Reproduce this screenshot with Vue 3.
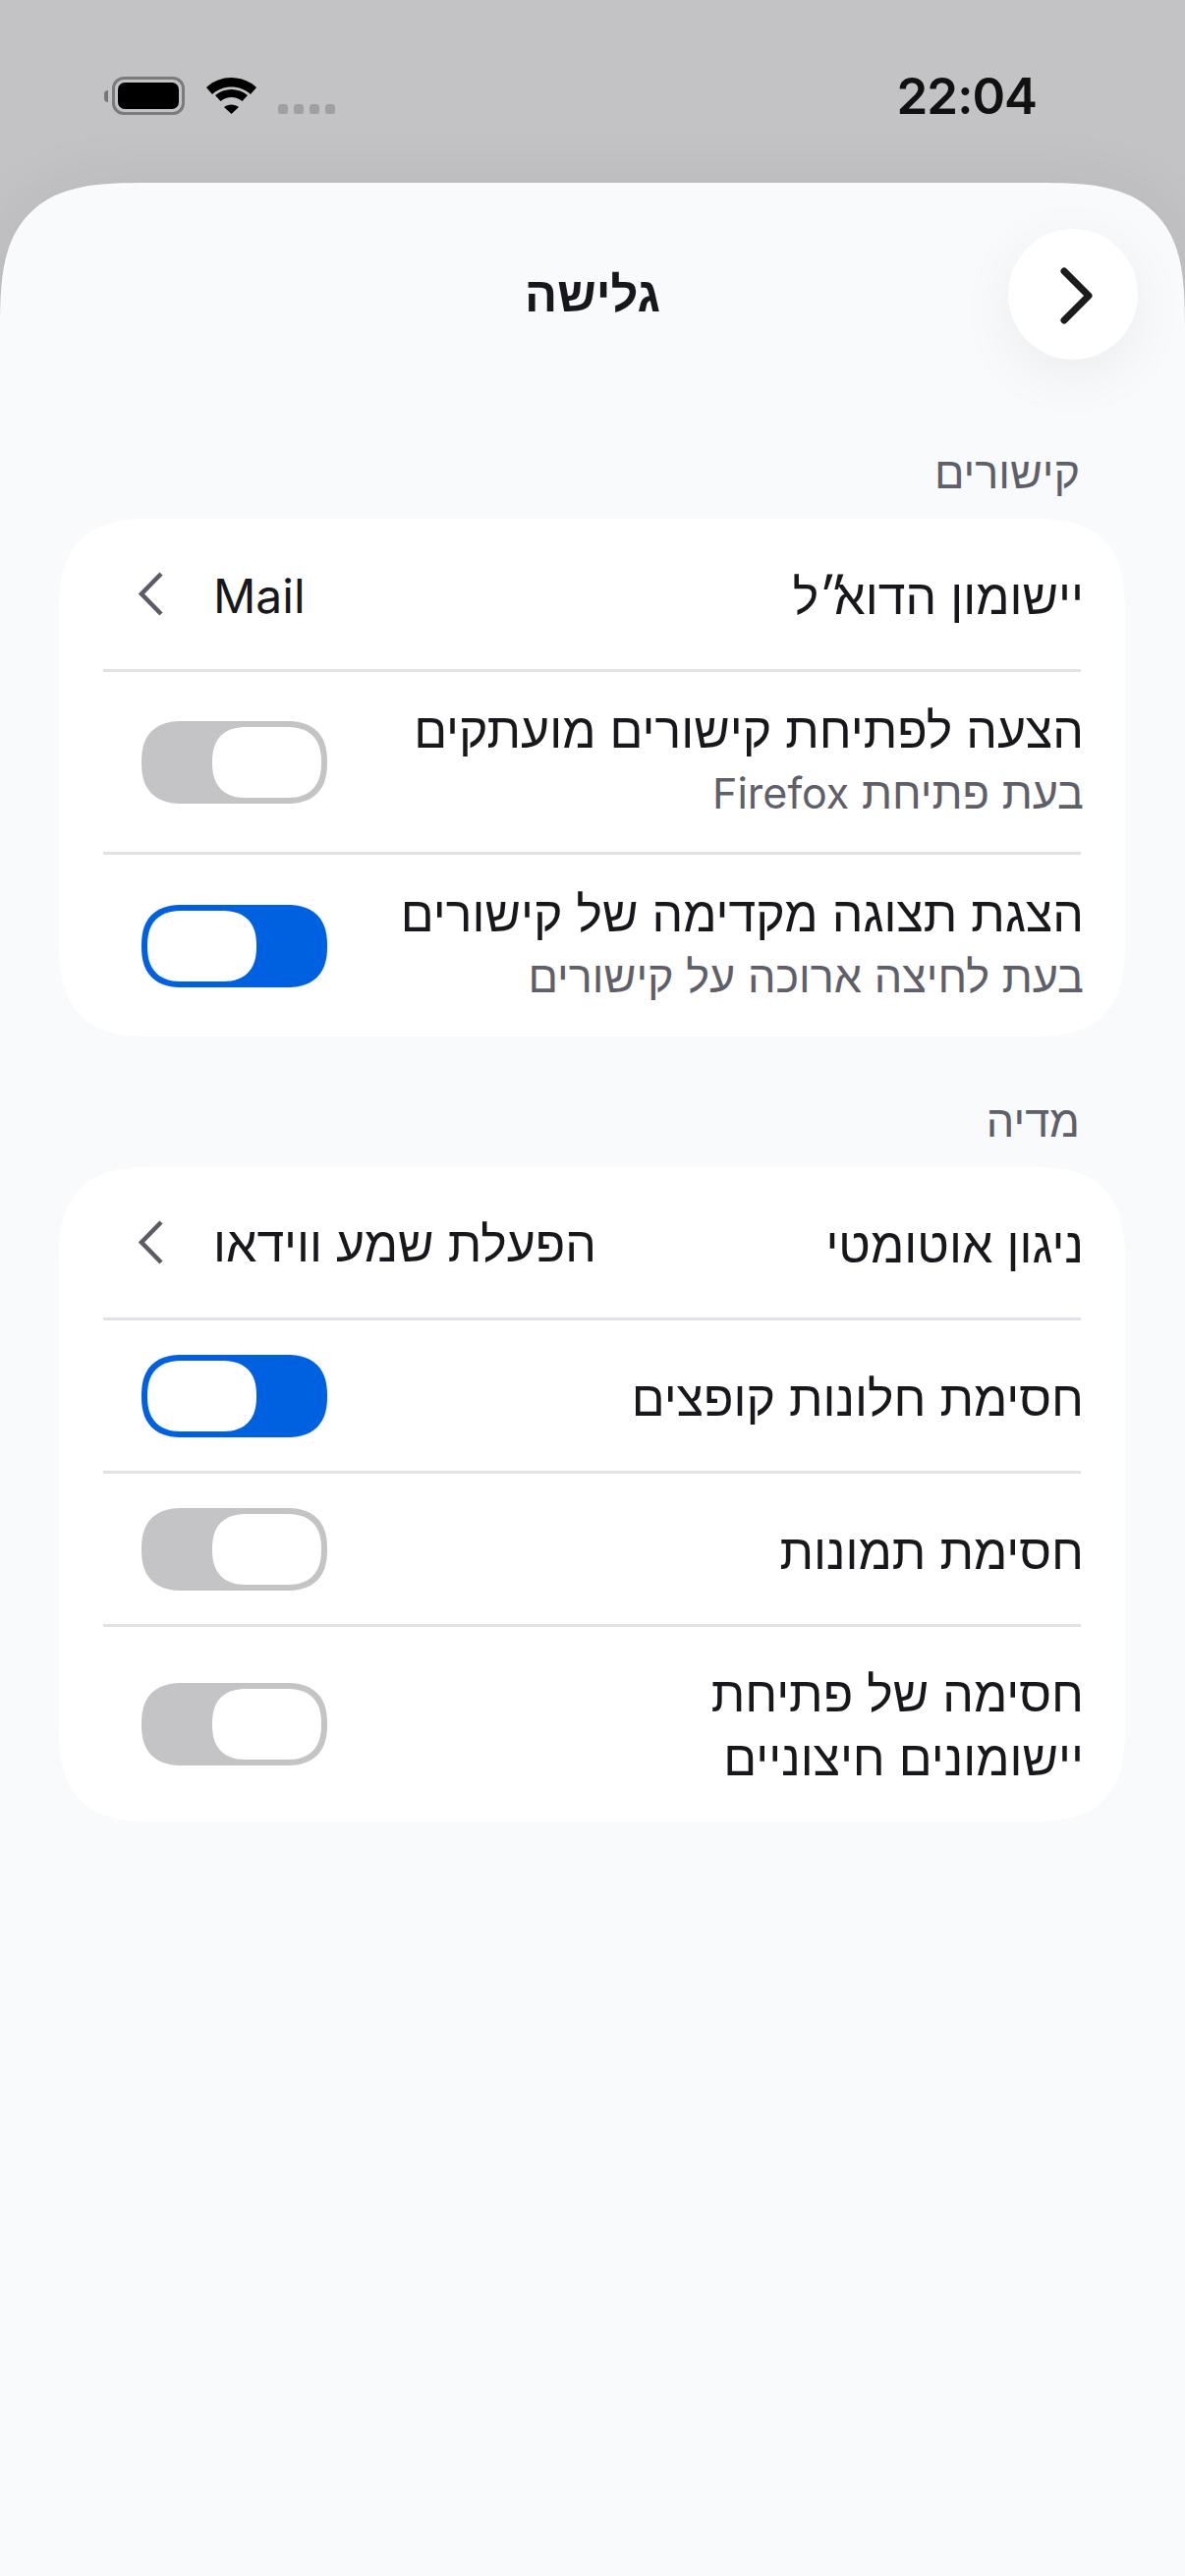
<script setup>
const sections = [
  {
    label: 'קישורים',
    rows: [
      { title: 'יישומון הדוא', mark: '״', titleEnd: 'ל', value: 'Mail', latin: true },
      { title: 'הצעה לפתיחת קישורים מועתקים', sub: 'בעת פתיחת', subLatin: 'Firefox', on: false },
      { title: 'הצגת תצוגה מקדימה של קישורים', sub: 'בעת לחיצה ארוכה על קישורים', on: true },
    ],
  },
  {
    label: 'מדיה',
    rows: [
      { title: 'ניגון אוטומטי', value: 'הפעלת שמע ווידאו' },
      { title: 'חסימת חלונות קופצים', on: true },
      { title: 'חסימת תמונות', on: false },
      { title: 'חסימה של פתיחת\nיישומונים חיצוניים', on: false, tall: true },
    ],
  },
]
</script>

<template>
  <div class="page">
    <div class="status">
      <div class="status-left">
        <div class="battery">
          <span class="nub"></span>
          <span class="shell"><span class="charge"></span></span>
        </div>
        <svg class="wifi" width="51" height="37" viewBox="0 0 51 37">
          <path d="M0 10C14-3.3 37-3.3 51 10L45 17C34.5 7 16.5 7 6 17Z" />
          <path d="M9 18C18 10 33 10 42 18L36.5 24C30 18.5 21 18.5 14.5 24Z" />
          <path d="M18 30C22 26.5 29 26.5 33 30L25.5 37Z" />
        </svg>
        <div class="signal"><i></i><i></i><i></i><i></i></div>
      </div>
      <div class="time">22:04</div>
    </div>

    <div class="sheet" dir="rtl">
      <div class="header">
        <div class="back">
          <svg width="42" height="64" viewBox="0 0 42 64">
            <path d="M12 8L37 33L12 58" />
          </svg>
        </div>
        <div class="title">גלישה</div>
      </div>

      <div v-for="section in sections" :key="section.label" class="section">
        <div class="section-label">{{ section.label }}</div>
        <div class="card">
          <div
            v-for="row in section.rows"
            :key="row.title"
            class="row"
            :class="{ tall: row.tall, 'has-sub': row.sub }"
          >
            <div class="texts">
              <div class="row-title">{{ row.title }}<span v-if="row.mark" class="mark">{{ row.mark }}</span>{{ row.titleEnd }}</div>
              <div v-if="row.sub" class="row-sub">
                {{ row.sub }} <span v-if="row.subLatin" class="sub-latin">{{ row.subLatin }}</span>
              </div>
            </div>
            <div v-if="row.value" class="link">
              <span class="value" :class="{ latin: row.latin }">{{ row.value }}</span>
              <svg width="25" height="45" viewBox="0 0 25 45">
                <path d="M23 2L3 22.5L23 43" />
              </svg>
            </div>
            <div v-else class="toggle" :class="{ on: row.on }"><span class="thumb"></span></div>
          </div>
        </div>
      </div>
    </div>
  </div>
</template>

<style>
html,
body {
  margin: 0;
  background: #c3c3c5;
}
</style>

<style scoped>
.page {
  width: 1206px;
  height: 2622px;
  overflow: hidden;
  display: flex;
  flex-direction: column;
  font-family: Inter, 'Liberation Sans', sans-serif;
  color: #17171c;
  background: #c3c3c5;
}

.status {
  height: 186px;
  flex: none;
  box-sizing: border-box;
  padding: 78px 151px 0 106px;
  display: flex;
  justify-content: space-between;
  align-items: flex-start;
}

.status-left {
  display: flex;
  align-items: flex-end;
  height: 39px;
  gap: 22px;
}

.battery {
  display: flex;
  align-items: center;
  gap: 4px;
}

.nub {
  width: 4px;
  height: 12px;
  background: #77777a;
  border-radius: 4px 0 0 4px;
}

.shell {
  display: block;
  width: 74px;
  height: 39px;
  box-sizing: border-box;
  border: 3px solid #7b7b7d;
  border-radius: 12px;
  padding: 3px;
}

.charge {
  display: block;
  height: 100%;
  background: #000;
  border-radius: 7px;
}

.wifi {
  fill: #000;
  margin-bottom: 1px;
}

.signal {
  display: flex;
  gap: 6px;
  margin-bottom: 1px;
}

.signal i {
  width: 10px;
  height: 10px;
  border-radius: 3px;
  background: #a0a0a2;
}

.time {
  font-size: 51px;
  font-weight: 600;
  line-height: 39px;
  letter-spacing: -1px;
  color: #111;
}

.sheet {
  flex: 1;
  background: #f9fafc;
  border-radius: 150px 150px 0 0;
  corner-shape: superellipse(1.6);
  box-shadow: 0 0 70px rgba(0, 0, 0, 0.06);
}

.header {
  display: grid;
  grid-template-columns: 1fr auto 1fr;
  align-items: center;
  padding: 47px 48px 0 48px;
}

.back {
  width: 132px;
  height: 133px;
  border-radius: 50%;
  background: #fff;
  box-shadow: 0 16px 60px rgba(0, 0, 0, 0.06);
  display: flex;
  align-items: center;
  justify-content: center;
}

.back svg {
  fill: none;
  stroke: #1c1c1e;
  stroke-width: 7;
  stroke-linecap: round;
  stroke-linejoin: round;
}

.title {
  font-size: 49px;
  font-weight: 700;
}

.section {
  padding: 0 61px 0 60px;
}

.section-label {
  font-size: 45px;
  line-height: 50px;
  color: #5f5f69;
  padding: 0 46px 0 0;
  margin: 90px 0 22px 0;
}

.section + .section .section-label {
  margin-top: 61px;
}

.card {
  background: #fff;
  border-radius: 100px;
  corner-shape: superellipse(1.5);
}

.row {
  margin: 0 45px;
  min-height: 156px;
  display: flex;
  align-items: center;
  justify-content: space-between;
  border-bottom: 3px solid #e1e1e8;
  box-sizing: border-box;
}

.row:last-child {
  border-bottom: none;
}

.row.has-sub {
  min-height: 186px;
}

.row.has-sub:last-child {
  min-height: 185px;
}

.row.tall {
  min-height: 198px;
}

.texts {
  padding-top: 5px;
  margin-right: -3px;
}

.row.has-sub .texts {
  padding-top: 0;
  padding-bottom: 3px;
}

.row.tall .texts {
  padding-top: 4px;
}

.row-title {
  font-size: 50px;
  line-height: 65px;
  white-space: pre-line;
}

.mark {
  letter-spacing: -14px;
}

.row-sub {
  font-size: 45px;
  line-height: 62px;
  color: #5f5f69;
}

.sub-latin {
  font-size: 43px;
}

.link {
  display: flex;
  align-items: center;
  gap: 51px;
  margin-left: 36px;
  font-size: 50px;
  line-height: 65px;
}

.value {
  padding-top: 4px;
}

.value.latin {
  font-size: 48px;
}

.link svg {
  fill: none;
  stroke: #5c5c66;
  stroke-width: 4.5;
}

.toggle {
  width: 189px;
  height: 84px;
  margin-left: 39px;
  box-sizing: border-box;
  padding: 6px;
  border-radius: 42px;
  corner-shape: superellipse(1.3);
  background: #c4c4c6;
  display: flex;
  justify-content: flex-start;
}

.toggle.on {
  background: #0061e0;
  justify-content: flex-end;
}

.thumb {
  display: block;
  width: 111px;
  height: 72px;
  background: #fff;
  border-radius: 36px;
  corner-shape: superellipse(1.3);
}
</style>
